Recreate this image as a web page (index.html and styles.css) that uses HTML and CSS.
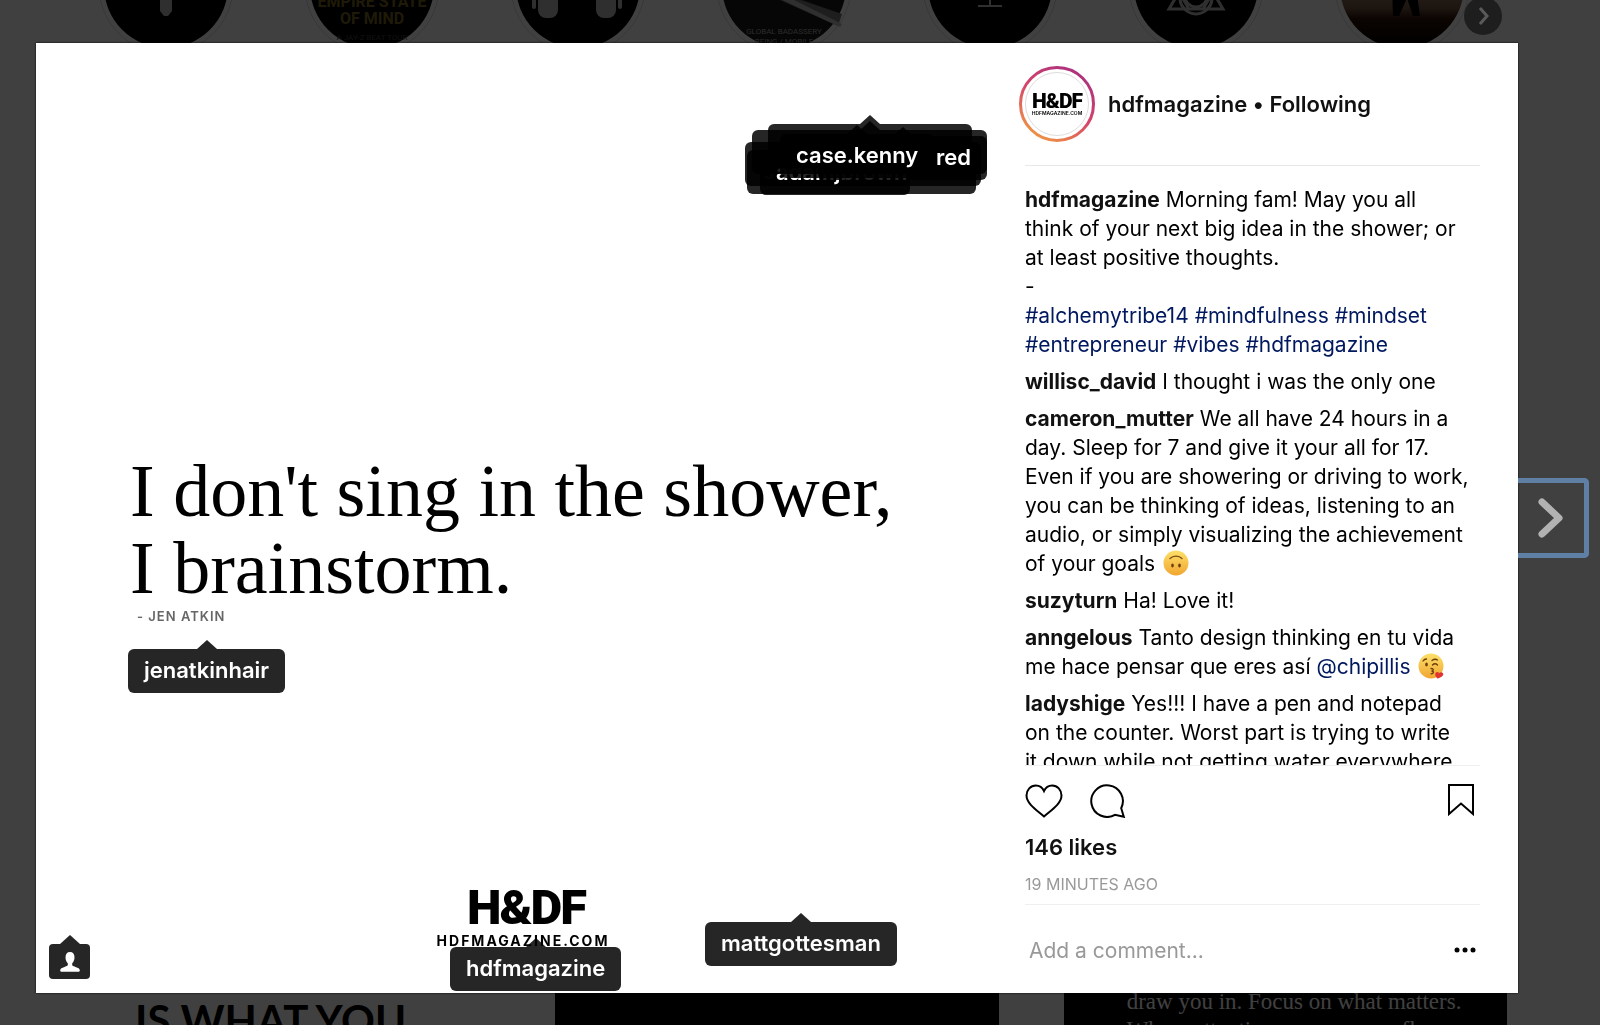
FILE: index.html
```html
<!DOCTYPE html>
<html lang="en">
<head>
<meta charset="utf-8">
<title>hdfmagazine</title>
<link rel="stylesheet" href="styles.css">
</head>
<body>
<div class="profile" aria-hidden="true">
  <div class="stories">
    <svg class="story" viewBox="0 0 136 136"><circle class="story-ring" cx="68" cy="68" r="67"/><circle cx="68" cy="68" r="62"/><path fill="#bbb" d="M62 82h12v11l-4 5h-4l-4-5z"/></svg>
    <svg class="story" viewBox="0 0 136 136"><circle class="story-ring" cx="68" cy="68" r="67"/><circle cx="68" cy="68" r="62"/><g class="story-title"><text x="68" y="89">EMPIRE STATE</text><text x="68" y="106">OF MIND</text></g><text class="story-note" x="68" y="122">A JAY-Z BEAT TOUR</text></svg>
    <svg class="story" viewBox="0 0 136 136"><circle class="story-ring" cx="68" cy="68" r="67"/><circle cx="68" cy="68" r="62"/><g fill="#bbb"><rect x="28" y="60" width="20" height="40" rx="8"/><rect x="86" y="60" width="20" height="40" rx="8"/><rect x="22" y="64" width="4" height="27" rx="2"/><rect x="108" y="64" width="4" height="27" rx="2"/></g></svg>
    <svg class="story" viewBox="0 0 136 136"><circle class="story-ring" cx="68" cy="68" r="67"/><circle cx="68" cy="68" r="62" fill="#181818"/><path fill="#777" d="M68 76l58 20-4 12-58-26z"/><path fill="#bbb" d="M66 76l60 30-2 3-62-29z"/><g class="story-caption"><text x="68" y="116">GLOBAL BADASSERY</text><text x="68" y="126">BEING / MOBILE</text></g></svg>
    <svg class="story" viewBox="0 0 136 136"><circle class="story-ring" cx="68" cy="68" r="67"/><circle cx="68" cy="68" r="62"/><path fill="none" stroke="#bbb" stroke-width="2" d="M68 50v38M56 88h24"/></svg>
    <svg class="story" viewBox="0 0 136 136"><circle class="story-ring" cx="68" cy="68" r="67"/><circle cx="68" cy="68" r="62"/><g fill="none" stroke="#bbb" stroke-width="3"><path d="M41 91l10-17 10 17zM75 91l10-17 10 17zM54 91h28"/><circle cx="68" cy="80" r="16"/><circle cx="68" cy="78" r="11"/></g></svg>
    <svg class="story" viewBox="0 0 136 136"><defs><linearGradient id="dusk" x2="0" y2="1"><stop offset=".5" stop-color="#a08870"/><stop offset=".68" stop-color="#745440"/><stop offset=".76" stop-color="#301408"/><stop offset=".95" stop-color="#080200"/></linearGradient></defs><circle class="story-ring" cx="68" cy="68" r="67"/><circle cx="68" cy="68" r="62" fill="url(#dusk)"/><path d="M58 70h24l4 28h-7l-6-18-8 18h-6z"/></svg>
  </div>
  <div class="posts">
    <div class="post post-light">IS WHAT YOU</div>
    <div class="post"></div>
    <div class="post post-serif">draw you in. Focus on what matters.<br>Where attention goes, energy flows</div>
  </div>
</div>

<div class="overlay">
  <svg class="stories-next" viewBox="0 0 38 38"><circle cx="19" cy="19" r="19"/><path d="M16 11l7 8-7 8"/></svg>
  <main class="modal">
    <section class="photo">
      <div class="quote">
        <p class="quote-text">I don't sing in the shower,<br>I brainstorm.</p>
        <p class="quote-author">- JEN ATKIN</p>
      </div>
      <div class="brand">
        <div class="brand-name">H&amp;DF</div>
        <div class="brand-site">HDFMAGAZINE.COM</div>
      </div>
      <a href="#" class="tag tag-a">s</a>
      <a href="#" class="tag tag-b"></a>
      <a href="#" class="tag tag-c">adamjbrown</a>
      <a href="#" class="tag tag-d"></a>
      <a href="#" class="tag tag-e"></a>
      <a href="#" class="tag tag-f">red</a>
      <a href="#" class="tag tag-kenny">case.kenny</a>
      <a href="#" class="tag tag-jen">jenatkinhair</a>
      <a href="#" class="tag tag-hdf">hdfmagazine</a>
      <a href="#" class="tag tag-matt">mattgottesman</a>
      <button class="tag people" aria-label="Tagged people"><svg viewBox="0 0 20 20"><path d="M10 0c3 0 4.500 2 4.500 5.500 0 2.500-1 4.500-2.300 5.700v1.600c0 1 1 1.400 3.300 2.100 2.700.8 4.300 1.700 4.300 3.400 0 1-.6 1.500-1.600 1.500H1.800c-1 0-1.600-.5-1.600-1.500 0-1.700 1.600-2.600 4.300-3.400 2.300-.7 3.300-1.100 3.300-2.100v-1.600C6.500 10 5.500 8 5.500 5.500 5.500 2 7 0 10 0z"/></svg></button>
    </section>
    <section class="details">
      <header class="head">
        <div class="avatar">
          <svg class="avatar-ring" viewBox="0 0 76 76"><defs><linearGradient id="ring" x1=".2" y1="1" x2=".8" y2="0"><stop offset="0" stop-color="#f09a42"/><stop offset=".5" stop-color="#d6456a"/><stop offset="1" stop-color="#a8307f"/></linearGradient></defs><circle cx="38" cy="38" r="36.500" fill="none" stroke="url(#ring)" stroke-width="3"/><circle cx="38" cy="38" r="31.500" fill="#fff" stroke="#ddd"/></svg>
          <div class="avatar-brand"><span class="avatar-name">H&amp;DF</span><span class="avatar-site">HDFMAGAZINE.COM</span></div>
        </div>
        <div class="who"><a href="#">hdfmagazine</a> • <button class="follow">Following</button></div>
      </header>
      <ul class="comments">
        <li><a class="user" href="#">hdfmagazine</a> Morning fam! May you all<br>think of your next big idea in the shower; or<br>at least positive thoughts.<br>-<br><a href="#">#alchemytribe14</a> <a href="#">#mindfulness</a> <a href="#">#mindset</a> <a href="#">#entrepreneur</a> <a href="#">#vibes</a> <a href="#">#hdfmagazine</a></li>
        <li><a class="user" href="#">willisc_david</a> I thought i was the only one</li>
        <li><a class="user" href="#">cameron_mutter</a> We all have 24 hours in a day. Sleep for 7 and give it your all for 17. Even if you are showering or driving to work, you can be thinking of ideas, listening to an audio, or simply visualizing the achievement of your goals <svg class="emoji" viewBox="0 0 26 26"><circle cx="13" cy="13" r="12.500" fill="url(#face)"/><path d="M7 8.500c3-3.300 9-3.300 12 0" fill="none" stroke="#7a4a12" stroke-width="1.300" stroke-linecap="round"/><ellipse cx="9.500" cy="15.500" rx="1.300" ry="2" fill="#6b3d0c"/><ellipse cx="16.500" cy="15.500" rx="1.300" ry="2" fill="#6b3d0c"/></svg></li>
        <li><a class="user" href="#">suzyturn</a> Ha! Love it!</li>
        <li><a class="user" href="#">anngelous</a> Tanto design thinking en tu vida me hace pensar que eres así <a href="#">@chipillis</a> <svg class="emoji" viewBox="0 0 26 26"><defs><linearGradient id="face" x2="0" y2="1"><stop offset="0" stop-color="#fde06a"/><stop offset="1" stop-color="#f0a630"/></linearGradient></defs><circle cx="13" cy="13" r="12.500" fill="url(#face)"/><g fill="none" stroke="#6b3d0c" stroke-width="1.300" stroke-linecap="round"><path d="M5 8c1-1.500 2-2 3.500-2M14 7.500c2-1.500 4-1.500 5.500-.5M14.500 12c1.500-1.500 3.500-1.500 5 0M13 15.500c3 0 3 2.200.5 2.500 3 .2 2.500 2.800-.5 2.800"/></g><ellipse cx="8.500" cy="11.500" rx="1.300" ry="2" fill="#6b3d0c"/><path d="M19.500 25.500c-2-2-3-4-1.800-5.700 1-1.300 2.700-1 3.300.4 1-1.200 3-1.500 4 0 1.200 2.200-2 4.300-5.500 5.300z" fill="#e0342f"/></svg></li>
        <li><a class="user" href="#">ladyshige</a> Yes!!! I have a pen and notepad<br>on the counter. Worst part is trying to write<br>it down while not getting water everywhere</li>
      </ul>
      <footer class="foot">
        <div class="actions">
          <button aria-label="Like"><svg class="i-heart" viewBox="0 0 38 34"><path d="M19 32.500C13 27 1.500 20 1.500 11.500c0-5.600 4.200-10 9.300-10 3.700 0 6.600 2 8.200 5.500 1.600-3.500 4.500-5.500 8.200-5.500 5.100 0 9.300 4.400 9.300 10C36.500 20 25 27 19 32.500z"/></svg></button>
          <button aria-label="Comment"><svg class="i-bubble" viewBox="0 0 36 34"><path d="M33.800 32.800l-2.600-8.600a15.800 15.800 0 1 0-6.200 6.600z"/></svg></button>
          <button class="save" aria-label="Save"><svg class="i-save" viewBox="0 0 26 32"><path d="M1 1h24v29L13 19.500 1 30z"/></svg></button>
        </div>
        <a class="likes" href="#">146 likes</a>
        <time class="time">19 MINUTES AGO</time>
        <form class="reply">
          <input type="text" placeholder="Add a comment..." aria-label="Add a comment">
          <button type="button" aria-label="More options"><svg class="i-more" viewBox="0 0 22 6"><circle cx="3" cy="3" r="2.500"/><circle cx="11" cy="3" r="2.500"/><circle cx="19" cy="3" r="2.500"/></svg></button>
        </form>
      </footer>
    </section>
  </main>
  <button class="next" aria-label="Next"><svg viewBox="0 0 30 44"><path d="M6 6l17 16L6 38"/></svg></button>
</div>
</body>
</html>
```
FILE: styles.css
```css
* { box-sizing: border-box; }
body { margin: 0; overflow: hidden; background: #fff; color: #000; font: 21px/29px Inter, "Noto Sans", sans-serif; }
a { color: #00185e; text-decoration: none; }
button { margin: 0; padding: 0; border: 0; background: none; font: inherit; color: inherit; }
p, ul { margin: 0; padding: 0; }
svg { display: block; flex: none; }

/* Profile page behind the dialog, scrolled part of the way down */
.profile { height: 100vh; overflow: hidden; }
.stories { display: flex; gap: 70px; margin-top: -82px; padding-left: 98px; }
.story { width: 136px; height: 136px; }
.story-ring { fill: none; stroke: #dbdbdb; stroke-width: 1px; }
.story-title { fill: #7c6820; font: 700 16px Roboto, sans-serif; text-anchor: middle; }
.story-note { fill: #444; font: 8px Roboto, sans-serif; text-anchor: middle; }
.story-caption { fill: #aaa; font: 8px Roboto, sans-serif; text-anchor: middle; }
.posts { display: grid; grid-template-columns: repeat(3, 1fr); gap: 65px; margin-top: 560px; padding: 0 93px 0 47px; }
.post { aspect-ratio: 1; background: #000; color: #fff; overflow: hidden; white-space: nowrap; }
.post-light { padding: 382px 88px 0; background: #fff; color: #000; font: 700 42px/48px Lato, sans-serif; }
.post-serif { padding: 374px 63px 0; font: 23px/28px "Liberation Serif", serif; }

.overlay { position: fixed; inset: 0; display: flex; align-items: flex-start; padding: 43px 11px 0 36px; background: rgba(0, 0, 0, .75); }
.stories-next { position: absolute; top: -3px; right: 98px; width: 38px; height: 38px; fill: #1e1e1e; }
.stories-next path { fill: none; stroke: #5a5a5a; stroke-width: 3px; }
.next { align-self: flex-start; display: grid; place-items: center; width: 71px; height: 80px; margin-top: 435px; border: 5px solid #5f7fa5; border-left: 0; border-radius: 0 5px 5px 0; }
.next svg { width: 30px; height: 44px; fill: none; stroke: #b2b2b2; stroke-width: 7px; stroke-linecap: round; stroke-linejoin: round; }

.modal { flex: 1; display: grid; grid-template-columns: minmax(0, 1fr) 532px; background: #fff; box-shadow: 0 0 2px #000; }
.photo { position: relative; aspect-ratio: 1; display: flex; flex-direction: column; justify-content: space-between; padding: 410px 24px 44px 94px; }
.quote-text { font: 74px/77px "Liberation Serif", serif; white-space: nowrap; }
.quote-author { padding: 1px 0 0 7px; color: #666; font-size: 13px; line-height: 16px; font-weight: 600; letter-spacing: 1px; }
.brand { width: 174px; margin-left: 306px; text-align: center; white-space: nowrap; }
.brand-name { padding-left: 6px; font: 900 49px/50px Roboto, sans-serif; letter-spacing: -2px; }
.brand-site { font-size: 14px; line-height: 16px; font-weight: 700; letter-spacing: 2px; }

.tag { position: absolute; height: 44px; padding: 0 16px; border-radius: 6px; background: rgba(0, 0, 0, .85); color: #fff; font-size: 22px; font-weight: 600; line-height: 43px; white-space: nowrap; }
.tag::before { content: ""; position: absolute; bottom: 100%; left: 50%; margin-left: -10px; border: 10px solid transparent; border-top: 0; border-bottom: 9px solid rgba(0, 0, 0, .85); }
.tag-a { left: 711px; top: 107px; width: 229px; }
.tag-b { left: 709px; top: 99px; width: 236px; }
.tag-c { left: 724px; top: 108px; width: 150px; }
.tag-d { left: 732px; top: 81px; width: 204px; }
.tag-e { left: 716px; top: 87px; width: 235px; }
.tag-f { left: 782px; top: 93px; width: 169px; text-align: right; }
.tag-kenny { left: 744px; top: 91px; }
.tag-jen { left: 92px; top: 606px; }
.tag-hdf { left: 414px; top: 904px; }
.tag-matt { left: 669px; top: 879px; }
.people { left: 13px; bottom: 14px; display: grid; place-items: center; width: 41px; height: 35px; padding: 0; border-radius: 4px; }
.people svg { width: 20px; height: 20px; fill: #fff; }

.details { display: flex; flex-direction: column; min-width: 0; padding: 0 38px 0 39px; }
.head { display: flex; align-items: center; gap: 13px; padding: 23px 0; margin-left: -6px; }
.head + .comments { border-top: 1px solid #e8e8e8; }
.avatar { display: grid; place-items: center; width: 76px; height: 76px; }
.avatar-ring { grid-area: 1 / 1; width: 76px; height: 76px; }
.avatar-brand { grid-area: 1 / 1; z-index: 1; display: flex; flex-direction: column; align-items: center; }
.avatar-name { font: 900 21px/18px Roboto, sans-serif; letter-spacing: -1px; }
.avatar-site { font-size: 5px; line-height: 6px; font-weight: 600; }
.who { color: #111; font-size: 22px; font-weight: 600; }
.who a { color: #111; }

.comments { flex: 1 1 0; min-height: 0; overflow: hidden; padding-top: 19px; list-style: none; }
.comments li { margin-bottom: 8px; }
.comments .user { color: #111; font-weight: 700; }
.emoji { display: inline-block; width: 26px; height: 26px; margin-left: 2px; vertical-align: -5px; }

.foot { border-top: 1px solid #efefef; }
.actions { display: flex; align-items: flex-start; gap: 27px; padding: 18px 6px 0 0; }
.actions svg { fill: none; stroke: #000; stroke-width: 2px; }
.i-heart { width: 38px; height: 34px; }
.i-bubble { width: 36px; height: 34px; }
.i-save { width: 26px; height: 32px; }
.save { margin-left: auto; }
.likes { display: block; padding-top: 15px; color: #111; font-size: 22px; font-weight: 600; }
.time { display: block; padding: 11px 0 9px; color: #999; font-size: 16px; line-height: 22px; }
.reply { display: flex; align-items: center; justify-content: space-between; height: 89px; padding: 2px 4px 0; border-top: 1px solid #efefef; }
.reply input { flex: 1; min-width: 0; padding: 0; border: 0; background: none; font: inherit; }
.reply input::placeholder { color: #999; opacity: 1; }
.i-more { width: 22px; height: 6px; }
```
